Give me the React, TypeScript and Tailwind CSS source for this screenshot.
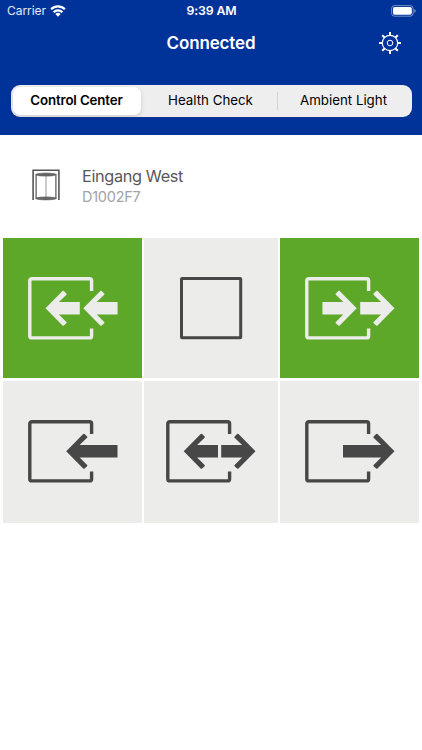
import React, {useState} from 'react';

export interface ArrowProps {
  x: number;
  length?: number;
  right?: boolean;
}

const Arrow = ({x, length = 34.3, right}: ArrowProps) => {
  // x is the tip, the shaft runs away from it
  return (
    <path
      transform={`translate(${x} 31.3) scale(${right ? -1 : 1} 1)`}
      fill="currentColor"
      d={`M0 0L17 -17.2Q17.7 -17.8 18.4 -17.2L20.9 -14.9Q21.5 -14.2 20.9 -13.6L13.4 -6.2H${length}V6.2H13.4L20.9 13.6Q21.5 14.2 20.9 14.9L18.4 17.2Q17.7 17.8 17 17.2Z`}
    />
  )
}

const Frame = ({children}: {children: React.ReactNode}) => (
  <svg width="90" height="63" viewBox="0 0 90 63" fill="none">
    <path
      stroke="currentColor"
      strokeWidth="3.4"
      d="M63.6 14V3.7a2 2 0 0 0-2-2H3.8a2 2 0 0 0-2 2v55.2a2 2 0 0 0 2 2h57.8a2 2 0 0 0 2-2V51.5"
    />
    {children}
  </svg>
)

const SquareIcon = () => (
  <svg width="63" height="63" viewBox="0 0 63 63" fill="none">
    <rect x="1.5" y="1.5" width="59.2" height="59.2" rx="0.5" stroke="currentColor" strokeWidth="3" strokeLinejoin="round" />
  </svg>
)

const GearIcon = () => (
  <svg width="24" height="24" viewBox="0 0 24 24" fill="none" stroke="currentColor">
    <circle cx="12" cy="12" r="7.7" strokeWidth="1.2" />
    <circle cx="12" cy="12" r="2.8" strokeWidth="1" />
    {[0, 45, 90, 135, 180, 225, 270, 315].map((angle) => (
      <path key={angle} d="M12 4.3V1" strokeWidth="2" transform={`rotate(${angle} 12 12)`} />
    ))}
  </svg>
)

const WifiIcon = () => (
  <svg width="16" height="12" viewBox="0 0 16 12" fill="none" stroke="white" strokeWidth="2.2">
    <path d="M1.1 4.3a9.8 9.8 0 0 1 13.8 0" />
    <path d="M3.6 7.2a6.2 6.2 0 0 1 8.8 0" />
    <path d="M8 11.7L5.3 9a3.8 3.8 0 0 1 5.4 0Z" fill="white" stroke="none" />
  </svg>
)

const BatteryIcon = () => (
  <svg width="26" height="12" viewBox="0 0 26 12" fill="none">
    <rect x="0.6" y="0.6" width="21.6" height="10.6" rx="3" stroke="white" strokeOpacity="0.45" />
    <rect x="2" y="2" width="18.8" height="7.8" rx="1.7" fill="white" />
    <path d="M23.4 4.2q1.3.6 1.3 1.8t-1.3 1.8z" fill="white" fillOpacity="0.55" />
  </svg>
)

const DoorIcon = () => (
  <svg width="28" height="32" viewBox="0 0 28 32" fill="none" stroke="#555555">
    <path d="M1.1 31V1.2H26.9V31" strokeWidth="1.6" />
    <path d="M4.1 5V30M23.9 5V30" strokeWidth="1.2" />
    <path d="M14 6V29" strokeWidth="0.9" stroke="#8a8a8a" />
    <ellipse cx="14" cy="5.6" rx="10.2" ry="1.5" fill="#666666" strokeWidth="0.6" />
    <ellipse cx="14" cy="29.4" rx="10.2" ry="1.5" fill="#666666" strokeWidth="0.6" />
  </svg>
)

const tabs = ['Control Center', 'Health Check', 'Ambient Light'];

const modes = [
  {name: 'both in', icon: <Frame><Arrow x={17.5} /><Arrow x={55.3} /></Frame>},
  {name: 'closed', icon: <SquareIcon />},
  {name: 'both out', icon: <Frame><Arrow x={51.7} right /><Arrow x={89.5} right /></Frame>},
  {name: 'in', icon: <Frame><Arrow x={38.2} length={51.3} /></Frame>},
  {name: 'in and out', icon: <Frame><Arrow x={17.7} /><Arrow x={89.5} right /></Frame>},
  {name: 'out', icon: <Frame><Arrow x={89.5} length={51.5} right /></Frame>},
];

export default function App() {
  const [tab, setTab] = useState(tabs[0]);
  const [active, setActive] = useState(['both in', 'both out']);

  const toggle = (name: string) => {
    setActive(active.includes(name) ? active.filter((value) => value !== name) : [...active, name]);
  };

  return (
    <div className="h-[750px] w-[422px] overflow-hidden bg-white font-[Inter,sans-serif]">
      <header className="h-[134.5px] bg-[#003399] text-white">
        <div className="grid h-[22px] grid-cols-3 items-center pl-[7px] pr-[5px]">
          <div className="flex items-center gap-[4.5px] text-[12px] leading-4 text-white/90">
            <span className="tracking-[-0.05px]">Carrier</span>
            <WifiIcon />
          </div>
          <span className="pr-px text-center text-[12.3px] font-semibold leading-4 tracking-[-0.1px]">9:39 AM</span>
          <div className="flex justify-end">
            <BatteryIcon />
          </div>
        </div>
        <div className="grid h-[42px] grid-cols-[1fr_auto_1fr] items-center pr-5">
          <h1 className="col-start-2 pl-5 text-[17px] font-semibold leading-5 tracking-[-0.15px]">Connected</h1>
          <button className="justify-self-end">
            <GearIcon />
          </button>
        </div>
        <nav className="mx-[10.5px] mt-[20.5px] flex h-[32.5px] rounded-[9px] bg-[#eeeeef] p-[2px] text-[13.3px] text-black">
          {tabs.map((value, index) => (
            <React.Fragment key={value}>
              {index > 0 && (
                <span className={`my-[5px] w-px ${index === 1 ? 'mr-[3px] bg-transparent' : 'bg-[#d3d3d6]'}`} />
              )}
              <button
                onClick={() => setTab(value)}
                className={`whitespace-nowrap rounded-[7px] pt-px ${index === 0 ? 'w-[128px]' : 'flex-1 basis-0'} ${value === tab ? 'bg-white font-semibold tracking-[-0.13px] shadow-[0_2px_5px_rgba(0,0,0,0.14)]' : 'font-normal'}`}
              >
                {value}
              </button>
            </React.Fragment>
          ))}
        </nav>
      </header>

      <section className="flex h-[103.5px] items-start pl-8 pt-[30.5px]">
        <div className="mt-[4px]">
          <DoorIcon />
        </div>
        <div className="ml-[22px]">
          <p className="text-[16.3px] leading-[22px] tracking-[-0.36px] text-[#58585a]">Eingang West</p>
          <p className="text-[14.5px] leading-[20px] tracking-[-0.25px] text-[#a3a3a5]">D1002F7</p>
        </div>
      </section>

      <main className="ml-[3.3px] grid w-[415.5px] grid-cols-[138.5px_134.3px_138.5px] grid-rows-[140px_141.7px] justify-between gap-y-[3px]">
        {modes.map((mode) => (
          <button
            key={mode.name}
            aria-label={mode.name}
            onClick={() => toggle(mode.name)}
            className={`flex items-center justify-center pt-[0.3px] ${active.includes(mode.name) ? 'bg-[#5da829] text-[#ececeb]' : 'bg-[#ececeb] text-[#474747]'}`}
          >
            {mode.icon}
          </button>
        ))}
      </main>
    </div>
  )
}
